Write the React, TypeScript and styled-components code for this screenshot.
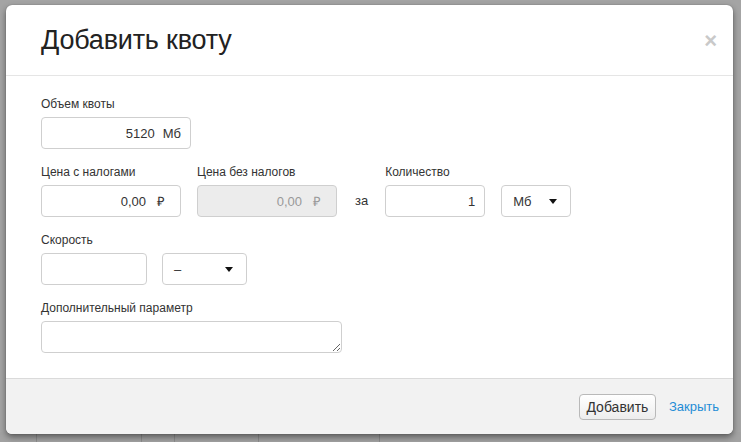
import React from "react";
import styled, { createGlobalStyle } from "styled-components";

const GlobalStyle = createGlobalStyle`
  html, body {
    margin: 0;
    padding: 0;
    background: #a4a4a4;
  }
  body {
    font-family: "Helvetica Neue", Helvetica, "Liberation Sans", Arial, sans-serif;
    color: #333;
  }
`;

const Page = styled.div`
  position: relative;
  width: 741px;
  height: 442px;
  overflow: hidden;
`;

const BackdropRow = styled.div`
  display: flex;
  margin-top: 432px;
  height: 12px;
  background: #a2a2a2;
`;

const BackdropCell = styled.div<{ $w: number }>`
  width: ${(p) => p.$w}px;
  border-right: 1px solid #8c8c8c;
`;

const Modal = styled.div`
  position: absolute;
  left: 6px;
  top: 5px;
  width: 727px;
  height: 429px;
  background: #fff;
  border-radius: 6px;
  box-shadow: 0 3px 6px rgba(0, 0, 0, 0.45), 0 0 1px rgba(0, 0, 0, 0.4);
  display: flex;
  flex-direction: column;
  overflow: hidden;
`;

const Header = styled.div`
  height: 70px;
  border-bottom: 1px solid #e5e5e5;
  display: flex;
  align-items: center;
  justify-content: space-between;
  padding: 0 16px 0 35px;
  box-sizing: content-box;
`;

const Title = styled.h2`
  margin: 0;
  font-size: 27px;
  font-weight: normal;
  color: #222;
  letter-spacing: -0.2px;
`;

const Close = styled.span`
  font-size: 22px;
  font-weight: bold;
  color: #c9c9c9;
  line-height: 1;
  margin-top: 2px;
`;

const Body = styled.div`
  flex: 1;
  padding: 18px 35px 0;
`;

const Group = styled.div`
  margin-bottom: 13px;
`;

const Row = styled.div`
  display: flex;
  align-items: flex-end;
`;

const Field = styled.div<{ $mr?: number }>`
  margin-right: ${(p) => p.$mr ?? 0}px;
`;

const Label = styled.div`
  font-size: 12px;
  line-height: 18px;
  height: 18px;
  margin-bottom: 5px;
  padding-top: 1px;
  box-sizing: border-box;
  color: #333;
`;

const InputBox = styled.div<{ $w: number; $disabled?: boolean; $pr?: number }>`
  width: ${(p) => p.$w}px;
  height: 32px;
  box-sizing: border-box;
  border: 1px solid #cfcfcf;
  border-radius: 4px;
  background: ${(p) => (p.$disabled ? "#ececec" : "#fff")};
  color: ${(p) => (p.$disabled ? "#999" : "#333")};
  display: flex;
  align-items: center;
  justify-content: flex-end;
  padding-right: ${(p) => p.$pr ?? 9}px;
  font-size: 13px;
`;

const Suffix = styled.span<{ $ml: number }>`
  margin-left: ${(p) => p.$ml}px;
`;

const Word = styled.span`
  font-size: 13px;
  height: 32px;
  line-height: 32px;
  margin: 0 17px 0 18px;
`;

const Select = styled.div<{ $w: number }>`
  width: ${(p) => p.$w}px;
  height: 32px;
  box-sizing: border-box;
  border: 1px solid #cfcfcf;
  border-radius: 4px;
  background: #fff;
  display: flex;
  align-items: center;
  justify-content: space-between;
  padding: 0 13px 0 11px;
  font-size: 13px;
`;

const Caret = styled.span`
  width: 0;
  height: 0;
  border-left: 4px solid transparent;
  border-right: 4px solid transparent;
  border-top: 5px solid #111;
`;

const TextArea = styled.textarea`
  display: block;
  width: 301px;
  height: 32px;
  box-sizing: border-box;
  border: 1px solid #cfcfcf;
  border-radius: 4px;
  font-family: inherit;
  font-size: 13px;
  resize: both;
  outline: none;
`;

const Footer = styled.div`
  height: 55px;
  border-top: 1px solid #dadada;
  background: #f2f2f2;
  display: flex;
  align-items: center;
  justify-content: flex-end;
  padding: 0 14px 0 0;
  gap: 13px;
`;

const Button = styled.button`
  height: 26px;
  width: 77px;
  margin-top: 1px;
  border: 1px solid #b9b9b9;
  border-radius: 4px;
  background: linear-gradient(#ffffff, #ededed);
  font-family: inherit;
  font-size: 14px;
  color: #333;
  padding: 0;
`;

const Link = styled.a`
  font-size: 13px;
  color: #1f8dd6;
  text-decoration: none;
  margin-top: -1px;
`;

export default function App() {
  return (
    <>
      <GlobalStyle />
      <Page>
        <BackdropRow>
          <BackdropCell $w={36} />
          <BackdropCell $w={104} />
          <BackdropCell $w={32} />
          <BackdropCell $w={83} />
          <BackdropCell $w={120} />
        </BackdropRow>
        <Modal>
          <Header>
            <Title>Добавить квоту</Title>
            <Close>×</Close>
          </Header>
          <Body>
            <Group>
              <Label>Объем квоты</Label>
              <InputBox $w={150}>
                5120<Suffix $ml={8}>Мб</Suffix>
              </InputBox>
            </Group>
            <Group>
              <Row>
                <Field $mr={16}>
                  <Label>Цена с налогами</Label>
                  <InputBox $w={140} $pr={15}>
                    0,00<Suffix $ml={11}>₽</Suffix>
                  </InputBox>
                </Field>
                <Field>
                  <Label>Цена без налогов</Label>
                  <InputBox $w={140} $pr={15} $disabled>
                    0,00<Suffix $ml={11}>₽</Suffix>
                  </InputBox>
                </Field>
                <Word>за</Word>
                <Field $mr={16}>
                  <Label>Количество</Label>
                  <InputBox $w={100}>1</InputBox>
                </Field>
                <Select $w={70}>
                  Мб
                  <Caret />
                </Select>
              </Row>
            </Group>
            <Group>
              <Label>Скорость</Label>
              <Row>
                <Field $mr={15}>
                  <InputBox $w={106} />
                </Field>
                <Select $w={85}>
                  –
                  <Caret />
                </Select>
              </Row>
            </Group>
            <Group>
              <Label>Дополнительный параметр</Label>
              <TextArea />
            </Group>
          </Body>
          <Footer>
            <Button>Добавить</Button>
            <Link href="#">Закрыть</Link>
          </Footer>
        </Modal>
      </Page>
    </>
  );
}
